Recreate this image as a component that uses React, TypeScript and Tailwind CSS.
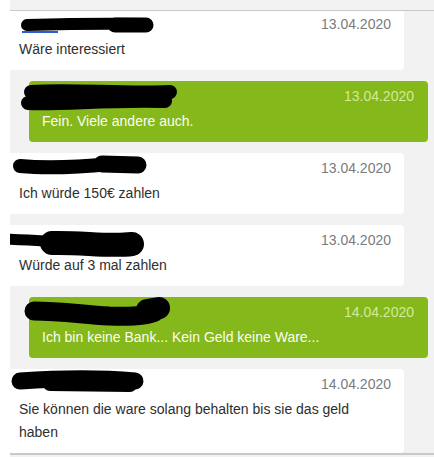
import React from 'react';

type Msg = {
  id: number;
  own: boolean;
  date: string;
  text: string;
  scribble: React.ReactNode;
};

// Schwärzung der Namen (freihand gezeichnet)
const ink = { stroke: '#000', strokeLinecap: 'round' as const, strokeLinejoin: 'round' as const, fill: 'none' };

const messages: Msg[] = [
  {
    id: 1,
    own: false,
    date: '13.04.2020',
    text: 'Wäre interessiert',
    scribble: (
      <>
        <path d="M12 23 L48 23" stroke="#2b5bd6" strokeWidth="2" />
        <path d="M17 16 C50 15 90 14 135 15" {...ink} strokeWidth="12" />
        <path d="M105 16 L136 16" {...ink} strokeWidth="15" />
      </>
    ),
  },
  {
    id: 2,
    own: true,
    date: '13.04.2020',
    text: 'Fein. Viele andere auch.',
    scribble: (
      <>
        <path d="M2 11 C40 8 90 13 141 11" {...ink} strokeWidth="14" />
        <path d="M-1 22 C30 24 80 18 136 20" {...ink} strokeWidth="14" />
      </>
    ),
  },
  {
    id: 3,
    own: false,
    date: '13.04.2020',
    text: 'Ich würde 150€ zahlen',
    scribble: (
      <>
        <path d="M10 13 C40 16 70 14 100 11 L128 13" {...ink} strokeWidth="14" />
        <path d="M92 11 L128 12" {...ink} strokeWidth="17" />
      </>
    ),
  },
  {
    id: 4,
    own: false,
    date: '13.04.2020',
    text: 'Würde auf 3 mal zahlen',
    scribble: (
      <>
        <path d="M96 11 L122 11" stroke="#2b5bd6" strokeWidth="2" />
        <path d="M-4 14 C20 15 40 16 60 18" {...ink} strokeWidth="11" />
        <path d="M42 18 C70 17 100 22 122 19" {...ink} strokeWidth="24" />
      </>
    ),
  },
  {
    id: 5,
    own: true,
    date: '14.04.2020',
    text: 'Ich bin keine Bank... Kein Geld keine Ware...',
    scribble: (
      <>
        <path d="M5 14 C30 14 50 17 80 19 C105 20 120 18 126 15" {...ink} strokeWidth="19" />
        <path d="M118 13 L130 11" {...ink} strokeWidth="22" />
      </>
    ),
  },
  {
    id: 6,
    own: false,
    date: '14.04.2020',
    text: 'Sie können die ware solang behalten bis sie das geld haben',
    scribble: (
      <>
        <path d="M10 12 C40 10 80 8 125 12" {...ink} strokeWidth="17" />
        <path d="M40 15 L120 16" {...ink} strokeWidth="14" />
      </>
    ),
  },
];

function MessageCard({ msg, first }: { msg: Msg; first: boolean }) {
  const box = msg.own
    ? 'ml-[19px] mr-[6px] rounded-[4px] bg-[#85b81a] pl-[13px] pr-[14px]'
    : 'mr-[30px] rounded-r-[4px] bg-white pl-[9px] pr-[13px]';

  return (
    <div className={`relative shrink-0 pt-[5px] pb-[9px] ${box} ${first ? '-mt-[2px]' : ''}`}>
      {/* geschwärzter Name */}
      <svg
        className="pointer-events-none absolute left-0 top-0 overflow-visible"
        width="160"
        height="34"
        viewBox="0 0 160 34"
      >
        {msg.scribble}
      </svg>

      <div className="flex h-[20px] items-center justify-end">
        <span className={msg.own ? 'text-[#d3e99c]' : 'text-[#7b7b7b]'}>{msg.date}</span>
      </div>
      <p className={`mt-[4px] leading-[23px] ${msg.own ? 'text-[#fbfdf4]' : 'text-[#2e2e2e]'}`}>
        {msg.text}
      </p>
    </div>
  );
}

export default function App() {
  return (
    <div
      className="h-[457px] w-[434px] overflow-hidden bg-white text-[14px]"
      style={{ fontFamily: '"Liberation Sans", Arial, sans-serif' }}
    >
      <div className="ml-[10px] h-full bg-[#f2f2f2]">
        <div className="h-[11px] border-b border-[#c9c9c9]" />
        <div className="flex h-[444px] flex-col gap-[11px] overflow-hidden border-b-2 border-[#c9c9c9]">
          {messages.map((m, i) => (
            <MessageCard key={m.id} msg={m} first={i === 0} />
          ))}
        </div>
      </div>
    </div>
  );
}
